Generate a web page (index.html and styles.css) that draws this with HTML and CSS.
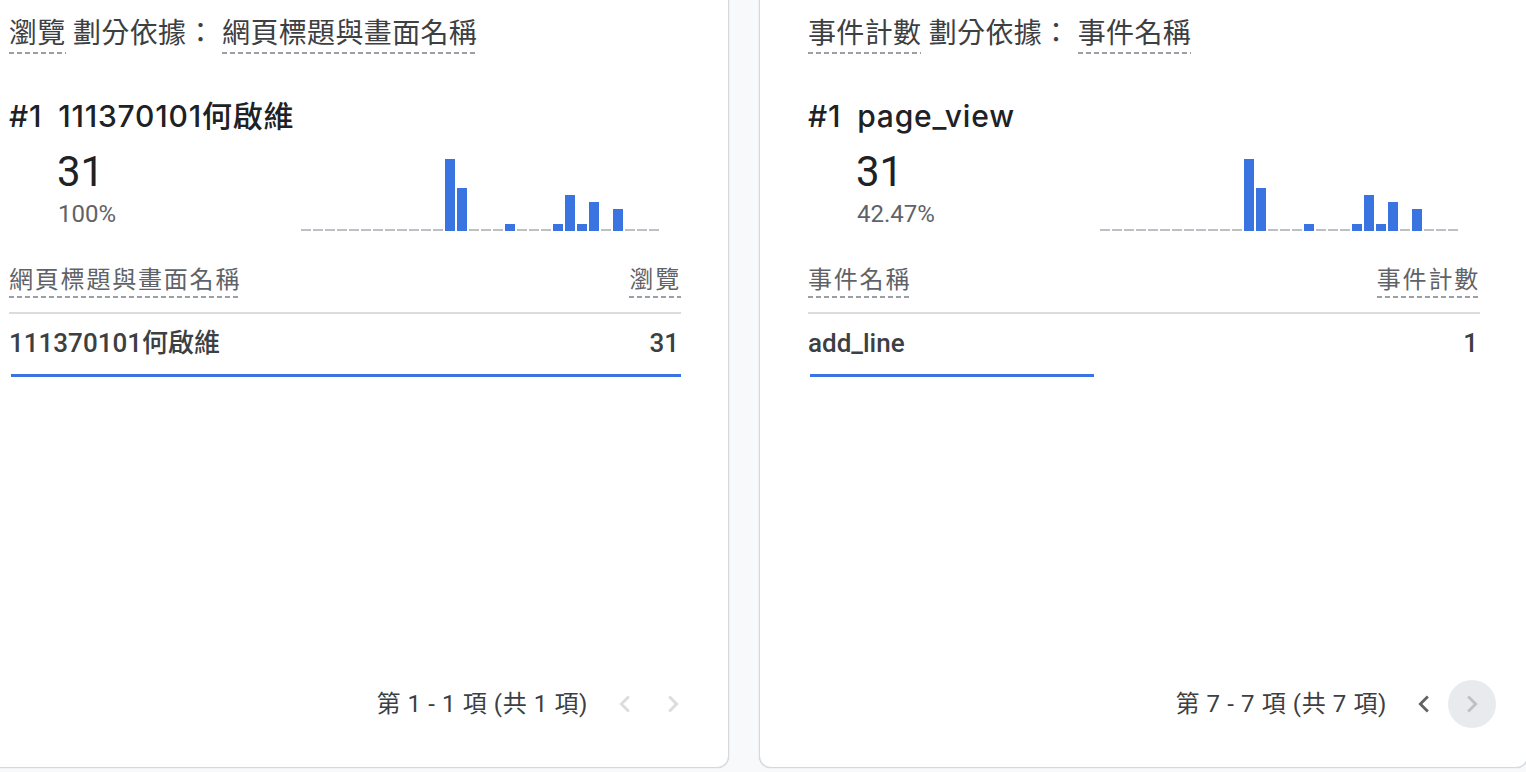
FILE: index.html
```html
<!DOCTYPE html>
<html lang="zh-Hant">
<head>
<meta charset="utf-8">
<title>Cards</title>
<link rel="stylesheet" href="styles.css">
</head>
<body>
<div class="page">
  <section class="card">
    <div class="card-title"><span class="dim">瀏覽</span> 劃分依據： <span class="dim">網頁標題與畫面名稱</span></div>
    <div class="top-name"><span class="rank">#1</span><span>111370101何啟維</span></div>
    <div class="summary">
      <div class="stats">
        <div class="big">31</div>
        <div class="pct">100%</div>
      </div>
      <div class="spark">
        <i></i><i></i><i></i><i></i><i></i><i></i><i></i><i></i><i></i><i></i><i></i><i></i>
        <b style="height:72px"></b><b style="height:43px"></b>
        <i></i><i></i><i></i>
        <b style="height:7px"></b>
        <i></i><i></i><i></i>
        <b style="height:7px"></b><b style="height:36px"></b><b style="height:7px"></b><b style="height:29px"></b>
        <i></i>
        <b style="height:22px"></b>
        <i></i><i></i><i></i>
      </div>
    </div>
    <div class="tbl">
      <div class="thead">
        <span class="dim">網頁標題與畫面名稱</span>
        <span class="dim">瀏覽</span>
      </div>
      <div class="trow">
        <span>111370101何啟維</span>
        <span>31</span>
      </div>
      <div class="bar"><div class="fill" style="width:100%"></div></div>
    </div>
    <div class="pager">
      <span class="range">第 1 - 1 項 (共 1 項)</span>
      <button class="nav off" aria-label="上一頁"><svg viewBox="0 0 24 24" width="34" height="34"><path d="M15.41 7.41L14 6l-6 6 6 6 1.41-1.41L10.83 12z"/></svg></button>
      <button class="nav off" aria-label="下一頁"><svg viewBox="0 0 24 24" width="34" height="34"><path d="M8.59 16.59L10 18l6-6-6-6-1.41 1.41L13.17 12z"/></svg></button>
    </div>
  </section>

  <section class="card">
    <div class="card-title"><span class="dim">事件計數</span> 劃分依據： <span class="dim">事件名稱</span></div>
    <div class="top-name"><span class="rank">#1</span><span>page_view</span></div>
    <div class="summary">
      <div class="stats">
        <div class="big">31</div>
        <div class="pct">42.47%</div>
      </div>
      <div class="spark">
        <i></i><i></i><i></i><i></i><i></i><i></i><i></i><i></i><i></i><i></i><i></i><i></i>
        <b style="height:72px"></b><b style="height:43px"></b>
        <i></i><i></i><i></i>
        <b style="height:7px"></b>
        <i></i><i></i><i></i>
        <b style="height:7px"></b><b style="height:36px"></b><b style="height:7px"></b><b style="height:29px"></b>
        <i></i>
        <b style="height:22px"></b>
        <i></i><i></i><i></i>
      </div>
    </div>
    <div class="tbl">
      <div class="thead">
        <span class="dim">事件名稱</span>
        <span class="dim">事件計數</span>
      </div>
      <div class="trow">
        <span>add_line</span>
        <span>1</span>
      </div>
      <div class="bar"><div class="fill" style="width:42.4%"></div></div>
    </div>
    <div class="pager">
      <span class="range">第 7 - 7 項 (共 7 項)</span>
      <button class="nav on" aria-label="上一頁"><svg viewBox="0 0 24 24" width="34" height="34"><path d="M15.41 7.41L14 6l-6 6 6 6 1.41-1.41L10.83 12z"/></svg></button>
      <button class="nav off hover" aria-label="下一頁"><svg viewBox="0 0 24 24" width="34" height="34"><path d="M8.59 16.59L10 18l6-6-6-6-1.41 1.41L13.17 12z"/></svg></button>
    </div>
  </section>
</div>
</body>
</html>
```

FILE: styles.css
```css
html, body {
  margin: 0;
  padding: 0;
  background: #f8f9fa;
  overflow: hidden;
}

body {
  font-family: Roboto, "Noto Sans CJK TC", "Noto Sans", sans-serif;
  color: #3c4043;
  width: 1526px;
  height: 772px;
}

.page {
  display: flex;
  gap: 30px;
  margin-top: -24px;
  margin-left: -40px;
}

.card {
  box-sizing: border-box;
  width: 769px;
  flex: none;
  height: 792px;
  background: #fff;
  border: 1px solid #d6d8dc;
  box-shadow: 0 0 1px rgba(60, 64, 67, 0.35);
  border-radius: 12px;
  padding: 39px 32px 39px 48px;
  display: flex;
  flex-direction: column;
}

.dim {
  background-image: linear-gradient(to right, #9aa0a6 0 5px, transparent 5px 8px);
  background-size: 8px 2px;
  background-repeat: repeat-x;
  background-position: 0 100%;
}

.card-title {
  font-size: 28px;
  letter-spacing: 0.35px;
  line-height: 36px;
  color: #3c4043;
  width: 672px;
  white-space: nowrap;
}

.card-title .dim {
  display: inline-block;
  line-height: 36px;
  padding-bottom: 2px;
}

.top-name {
  margin-top: 44px;
  font-family: Inter, "Noto Sans CJK TC", sans-serif;
  font-size: 30px;
  letter-spacing: 0.8px;
  line-height: 36px;
  font-weight: 500;
  color: #202124;
  display: flex;
  gap: 16px;
}

.summary {
  display: flex;
  align-items: flex-start;
  padding-left: 50px;
  margin-top: 10px;
  width: 672px;
  box-sizing: border-box;
}

.stats {
  width: 242px;
  flex: none;
  padding-top: 4px;
}

.big {
  font-size: 42px;
  line-height: 48px;
  color: #202124;
  margin-left: -2px;
}

.pct {
  font-size: 24px;
  line-height: 28px;
  margin-top: 4px;
  margin-left: -1px;
  color: #5f6368;
}

.spark {
  display: flex;
  align-items: flex-end;
  gap: 2px;
  height: 80px;
  margin-top: 7px;
}

.spark i,
.spark b {
  display: block;
  width: 10px;
  flex: none;
}

.spark i {
  height: 2px;
  background: #bdc1c6;
}

.spark b {
  background: #3a74e0;
}

.tbl {
  width: 672px;
  margin-top: 34px;
}

.thead {
  display: flex;
  justify-content: space-between;
  font-size: 24px;
  letter-spacing: 1.8px;
  line-height: 30px;
  color: #5f6368;
  padding-bottom: 14px;
  border-bottom: 2px solid #dadce0;
}

.thead .dim {
  display: inline-block;
  padding-bottom: 3px;
}

.trow {
  display: flex;
  justify-content: space-between;
  font-size: 26px;
  line-height: 32px;
  font-weight: 500;
  color: #3c4043;
  padding: 13px 2px 0 0;
}

.bar {
  margin-top: 15px;
  margin-left: 2px;
  height: 3px;
}

.fill {
  height: 3px;
  background: #3a74e0;
}

.pager {
  margin-top: auto;
  display: flex;
  align-items: center;
  justify-content: flex-end;
  width: 688px;
}

.range {
  font-size: 24px;
  letter-spacing: 0.6px;
  color: #3c4043;
  margin-right: 13px;
  line-height: 30px;
}

.nav {
  width: 48px;
  height: 48px;
  border: none;
  border-radius: 50%;
  background: transparent;
  display: flex;
  align-items: center;
  justify-content: center;
  padding: 0;
}

.nav svg {
  display: block;
}

.nav.off svg {
  fill: #dadce0;
}

.nav.on svg {
  fill: #5f6368;
}

.nav.hover {
  background: #e8eaed;
}

.nav.hover svg {
  fill: #bdc1c6;
}
```
